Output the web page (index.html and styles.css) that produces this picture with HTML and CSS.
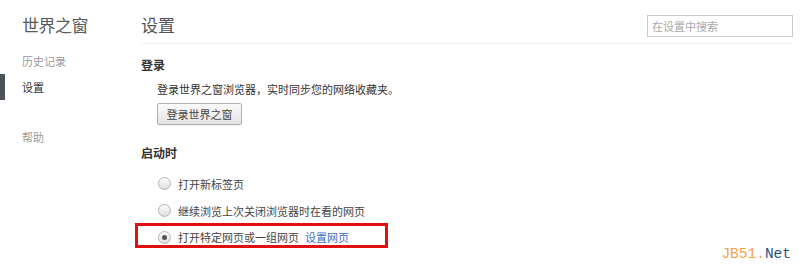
FILE: index.html
```html
<!DOCTYPE html>
<html lang="zh-CN">
<head>
<meta charset="utf-8">
<title>设置</title>
<link rel="stylesheet" href="styles.css">
</head>
<body>
<div class="page">
  <nav class="side">
    <h1 class="brand">世界之窗</h1>
    <ul class="menu">
      <li class="item">历史记录</li>
      <li class="item active">设置</li>
      <li class="item help">帮助</li>
    </ul>
  </nav>
  <main class="content">
    <header class="head">
      <h2 class="title">设置</h2>
      <input class="search" type="text" placeholder="在设置中搜索">
    </header>
    <section class="block">
      <h3 class="block-title">登录</h3>
      <div class="block-body">
        <p class="desc">登录世界之窗浏览器，实时同步您的网络收藏夹。</p>
        <button class="btn" type="button">登录世界之窗</button>
      </div>
    </section>
    <section class="block startup">
      <h3 class="block-title">启动时</h3>
      <div class="options">
        <label class="opt"><input class="radio" type="radio" name="s"><span>打开新标签页</span></label>
        <label class="opt"><input class="radio" type="radio" name="s"><span>继续浏览上次关闭浏览器时在看的网页</span></label>
        <label class="opt marked"><input class="radio" type="radio" name="s" checked><span>打开特定网页或一组网页</span><a class="link" href="#">设置网页</a></label>
      </div>
    </section>
  </main>
  <div class="watermark"><span class="wm-a">JB51.</span><span class="wm-b">Net</span></div>
</div>
</body>
</html>
```
FILE: styles.css
```css
* { box-sizing: border-box; }
html, body {
  margin: 0;
  padding: 0;
  background: #fff;
}
body {
  font-family: "Noto Sans CJK SC", "Noto Sans", sans-serif;
  color: #333;
  font-size: 11px;
}
.page {
  position: relative;
  display: flex;
  width: 800px;
  height: 267px;
  overflow: hidden;
}
.side {
  width: 140px;
  flex: none;
}
.brand {
  margin: 13px 0 0 22px;
  font-size: 17px;
  line-height: 24px;
  font-weight: normal;
  color: #5a5a5a;
  letter-spacing: -0.5px;
}
.menu {
  list-style: none;
  margin: 11px 0 0;
  padding: 0;
}
.item {
  height: 26px;
  line-height: 26px;
  padding-left: 22px;
  color: #9a9a9a;
  font-size: 11px;
}
.item.active {
  color: #333;
  box-shadow: inset 5px 0 0 #4b525a;
}
.item.help {
  margin-top: 24px;
}
.content {
  flex: 1;
  padding-right: 7px;
  padding-left: 1px;
}
.head {
  display: flex;
  justify-content: space-between;
  align-items: flex-start;
  padding-top: 13px;
  height: 44px;
  border-bottom: 1px solid #eeeeee;
}
.title {
  margin: 0;
  font-size: 17px;
  line-height: 24px;
  font-weight: normal;
  color: #555;
}
.search {
  margin-top: 2px;
  width: 146px;
  height: 22px;
  border: 1px solid #c9c9c9;
  padding: 0 4px;
  font-family: inherit;
  font-size: 11px;
  color: #333;
  outline: none;
}
.search::placeholder { color: #aaa; }
.block-title {
  margin: 0;
  font-size: 12px;
  line-height: 18px;
  font-weight: bold;
  color: #333;
}
.block {
  margin-top: 12px;
}
.block-body {
  padding-left: 16px;
  margin-top: 6px;
}
.desc {
  margin: 0;
  line-height: 18px;
  color: #333;
}
.btn {
  margin-top: 5px;
  height: 22px;
  width: 85px;
  padding: 0;
  border: 1px solid #b0b0b0;
  border-radius: 2px;
  background: linear-gradient(#fafafa, #e4e4e4);
  font-family: inherit;
  font-size: 11px;
  color: #444;
  box-shadow: 0 1px 0 rgba(0,0,0,0.05);
}
.startup {
  margin-top: 19px;
}
.options {
  margin-top: 8px;
}
.opt {
  display: flex;
  align-items: center;
  height: 27px;
  padding-left: 17px;
  color: #444;
}
.opt.marked {
  margin-top: -1px;
  margin-left: -6px;
  width: 253px;
  height: 25px;
  padding-left: 20px;
  padding-top: 3px;
  border: 3px solid #e01010;
}
.radio {
  appearance: none;
  -webkit-appearance: none;
  margin: 0 7px 0 0;
  width: 13px;
  height: 13px;
  border-radius: 50%;
  border: 1px solid #b4b4b4;
  background: linear-gradient(#fdfdfd, #dedede);
  position: relative;
  flex: none;
}
.radio:checked::after {
  content: "";
  position: absolute;
  left: 3px;
  top: 3px;
  width: 5px;
  height: 5px;
  border-radius: 50%;
  background: #555;
}
.link {
  margin-left: 6px;
  color: #3a6fc4;
  text-decoration: none;
}
.watermark {
  position: absolute;
  right: 9px;
  bottom: 5px;
  font-family: "Liberation Mono", "DejaVu Sans Mono", monospace;
  font-size: 14.5px;
  line-height: 16px;
}
.wm-a { color: #f2a446; }
.wm-b { color: #2d4f7e; }
```
